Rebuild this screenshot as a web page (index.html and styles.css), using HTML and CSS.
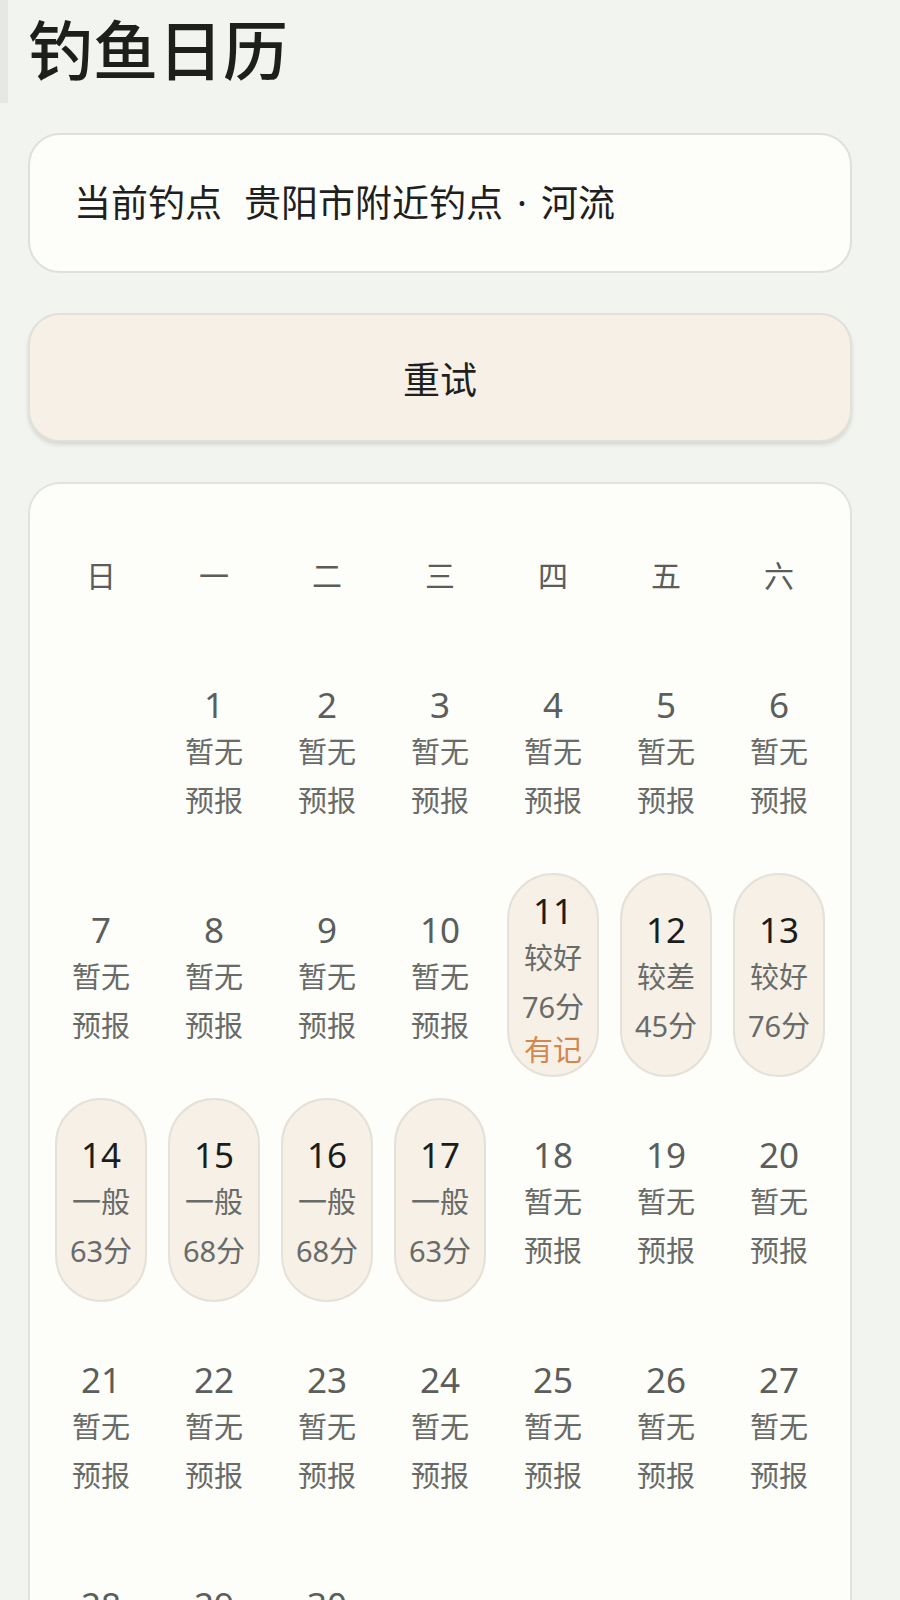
FILE: index.html
```html
<!DOCTYPE html>
<html lang="zh-CN">
<head>
    <meta charset="UTF-8">
    <meta name="viewport" content="width=device-width, initial-scale=1.0">
    <title>钓鱼日历</title>
    <link rel="stylesheet" href="styles.css">
</head>
<body>

    <div class="page">
        <h1 class="page-title">钓鱼日历</h1>

        <!-- Current spot -->
        <div class="spot-card">
            <span class="spot-label">当前钓点</span>
            <span>贵阳市附近钓点</span><span class="spot-dot">·</span><span>河流</span>
        </div>

        <button type="button" class="retry-btn">重试</button>

        <!-- Calendar -->
        <div class="calendar-card">
            <div class="week-row">
                <span>日</span><span>一</span><span>二</span><span>三</span><span>四</span><span>五</span><span>六</span>
            </div>
            <div class="day-grid" id="dayGrid"></div>
        </div>
    </div>

    <script>
        // forecast data for the days we have a score for
        const forecast = {
            11: { level: '较好', score: 76, note: '有记' },
            12: { level: '较差', score: 45 },
            13: { level: '较好', score: 76 },
            14: { level: '一般', score: 63 },
            15: { level: '一般', score: 68 },
            16: { level: '一般', score: 68 },
            17: { level: '一般', score: 63 }
        };

        const grid = document.getElementById('dayGrid');
        const firstWeekday = 1;
        const daysInMonth = 30;

        for (let i = 0; i < firstWeekday; i++) {
            const empty = document.createElement('div');
            empty.className = 'day';
            grid.appendChild(empty);
        }

        for (let d = 1; d <= daysInMonth; d++) {
            const cell = document.createElement('div');
            const f = forecast[d];
            if (f) {
                cell.className = 'day day-active';
                cell.innerHTML = `
                    <span class="day-num">${d}</span>
                    <span class="day-text">${f.level}</span>
                    <span class="day-text">${f.score}分</span>
                    ${f.note ? `<span class="day-note">${f.note}</span>` : ''}
                `;
            } else {
                cell.className = 'day';
                cell.innerHTML = `
                    <span class="day-num">${d}</span>
                    <span class="day-text">暂无</span>
                    <span class="day-text">预报</span>
                `;
            }
            grid.appendChild(cell);
        }
    </script>

</body>
</html>
```

FILE: styles.css
```css
body {
    margin: 0;
    background-color: #f2f5ef;
    font-family: "Noto Sans", "Noto Sans CJK SC", sans-serif;
    color: #1f221f;
}
.page {
    width: 824px;
    margin-left: 28px;
}
.page-title {
    margin: 0 0 30px -28px;
    padding-left: 20px;
    height: 103px;
    line-height: 100px;
    font-size: 65px;
    font-weight: 500;
    border-left: 8px solid #e6e8e3;
    box-sizing: border-box;
    color: #1c1f1c;
}
.spot-card {
    height: 140px;
    box-sizing: border-box;
    background-color: #fdfdf9;
    border: 2px solid #dfe0da;
    border-radius: 32px;
    padding: 0 0 4px 44px;
    display: flex;
    align-items: center;
    font-size: 37px;
    color: #1f1f1f;
}
.spot-label {
    margin-right: 22px;
}
.spot-dot {
    margin: 0 14px;
}
.retry-btn {
    display: block;
    width: 100%;
    height: 129px;
    margin-top: 40px;
    background-color: #f6f0e7;
    border: 2px solid #e2e0d8;
    border-radius: 32px;
    box-shadow: 0 3px 4px rgba(0, 0, 0, 0.12);
    font-family: inherit;
    font-size: 37px;
    color: #1f1f1f;
    cursor: pointer;
}
.calendar-card {
    margin-top: 40px;
    background-color: #fdfdf9;
    border: 2px solid #e2e3dd;
    border-bottom: none;
    border-radius: 32px 32px 0 0;
    padding: 64px 25px 40px;
    min-height: 1200px;
}
.week-row {
    display: grid;
    grid-template-columns: repeat(7, 1fr);
    column-gap: 21px;
    height: 52px;
    align-items: center;
    margin-bottom: 48px;
    font-size: 30px;
    color: #5a5d5a;
    text-align: center;
}
.day-grid {
    display: grid;
    grid-template-columns: repeat(7, 1fr);
    grid-auto-rows: 204px;
    gap: 21px;
}
.day {
    display: flex;
    flex-direction: column;
    align-items: center;
    justify-content: center;
    box-sizing: border-box;
    padding-top: 6px;
    border-radius: 46px;
    border: 2px solid transparent;
}
.day-active {
    background-color: #f6f0e7;
    border-color: #e4e1d9;
}
.day-num {
    font-size: 35px;
    line-height: 45px;
    color: #5b5e5b;
}
.day-active .day-num {
    color: #1b1d1b;
}
.day-text {
    font-size: 29px;
    line-height: 49px;
    color: #686b67;
}
.day-note {
    font-size: 29px;
    line-height: 38px;
    color: #d3874d;
}
```
